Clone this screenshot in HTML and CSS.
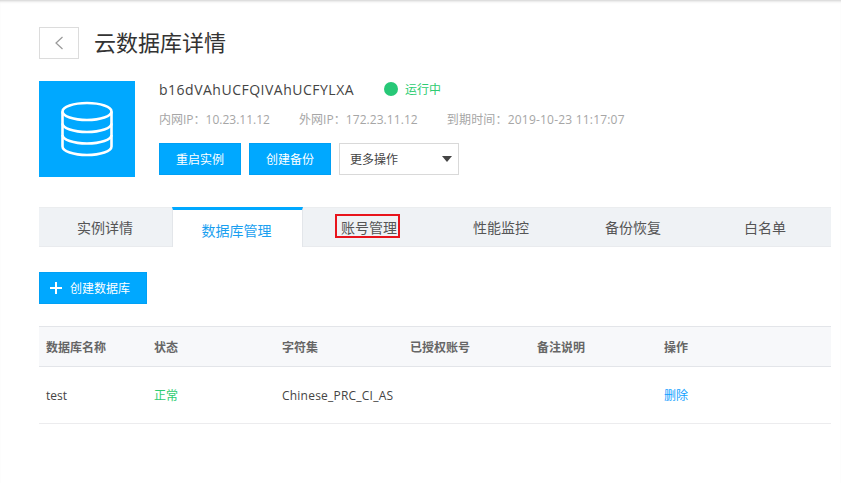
FILE: index.html
```html
<!DOCTYPE html>
<html lang="zh-CN">
<head>
<meta charset="utf-8">
<title>云数据库详情</title>
<link rel="stylesheet" href="styles.css">
</head>
<body>
<div class="page">
  <header class="head">
    <button class="back" aria-label="返回">
      <svg width="10" height="14" viewBox="0 0 10 14"><path d="M8.5 1 2 7l6.500 6" fill="none" stroke="#999" stroke-width="1.2"/></svg>
    </button>
    <h1 class="title">云数据库详情</h1>
  </header>

  <section class="summary">
    <div class="db-icon">
      <svg width="52" height="56" viewBox="0 0 52 56" fill="none" stroke="#fff" stroke-width="2.600">
        <ellipse cx="26" cy="10.500" rx="24.500" ry="8.500"/>
        <path d="M1.500 10.500v35c0 4.700 11 8.500 24.500 8.500s24.500-3.800 24.500-8.500v-35"/>
        <path d="M1.500 22.500c0 4.700 11 8.500 24.500 8.500s24.500-3.800 24.500-8.500"/>
        <path d="M1.500 34c0 4.700 11 8.500 24.500 8.500s24.500-3.800 24.500-8.500"/>
      </svg>
    </div>
    <div class="info">
      <div class="name-row">
        <span class="name">b16dVAhUCFQIVAhUCFYLXA</span>
        <span class="status"><i class="dot"></i>运行中</span>
      </div>
      <div class="meta">
        <span>内网IP：10.23.11.12</span>
        <span class="ext">外网IP：172.23.11.12</span>
        <span class="expire">到期时间：2019-10-23 11:17:07</span>
      </div>
      <div class="actions">
        <button class="btn">重启实例</button>
        <button class="btn">创建备份</button>
        <div class="select">更多操作<i class="caret"></i></div>
      </div>
    </div>
  </section>

  <nav class="tabs">
    <a class="tab">实例详情</a>
    <a class="tab active">数据库管理</a>
    <a class="tab"><span class="marked">账号管理</span></a>
    <a class="tab">性能监控</a>
    <a class="tab">备份恢复</a>
    <a class="tab">白名单</a>
  </nav>

  <button class="btn add">
    <svg width="12" height="12" viewBox="0 0 12 12"><path d="M6 0v12M0 6h12" stroke="#fff" stroke-width="2"/></svg>
    创建数据库
  </button>

  <table class="grid">
    <colgroup>
      <col class="c1"><col class="c2"><col class="c2"><col class="c3"><col class="c3"><col>
    </colgroup>
    <thead>
      <tr><th>数据库名称</th><th>状态</th><th>字符集</th><th>已授权账号</th><th>备注说明</th><th>操作</th></tr>
    </thead>
    <tbody>
      <tr><td>test</td><td class="ok">正常</td><td class="charset">Chinese_PRC_CI_AS</td><td></td><td></td><td><a class="link">删除</a></td></tr>
    </tbody>
  </table>
</div>
</body>
</html>
```
FILE: styles.css
```css
* { box-sizing: border-box; }
html, body { margin: 0; height: 100%; background: #fff; overflow: hidden; }
body {
  font-family: "Open Sans", "Noto Sans CJK SC", sans-serif;
  font-size: 12px;
  color: #444;
  box-shadow: inset 0 3px 3px -2px #ccc;
}
.page { padding: 27px 10px 0 39px; }

.head { display: flex; align-items: center; height: 32px; }
.back {
  width: 40px; height: 32px; padding: 0;
  display: flex; align-items: center; justify-content: center;
  background: #fff; border: 1px solid #dcdcdc;
}
.title { margin: -2px 0 0 15px; font-size: 22px; font-weight: 400; color: #333; line-height: 32px; }

.summary { display: flex; margin-top: 22px; height: 96px; }
.db-icon {
  width: 96px; height: 96px; background: #00a8ff;
  display: flex; align-items: center; justify-content: center;
}
.info { margin-left: 24px; }
.name-row { display: flex; align-items: center; height: 16px; }
.name { width: 225px; font-size: 14px; letter-spacing: .5px; color: #444; white-space: nowrap; }
.status { display: flex; align-items: center; color: #2ecc71; }
.dot { width: 14px; height: 14px; border-radius: 50%; background: #27c877; margin-right: 7px; }
.meta { display: flex; gap: 29px; margin-top: 15px; height: 16px; line-height: 16px; color: #a6a6a6; white-space: nowrap; }
.ext { letter-spacing: .06px; }
.expire { letter-spacing: .2px; }
.actions { display: flex; gap: 8px; margin-top: 15px; }

.btn {
  height: 32px; width: 82px; padding: 0;
  font: inherit; color: #fff;
  background: #00a8ff; border: 1px solid #00a0f5;
}
.select {
  position: relative;
  width: 120px; height: 32px; padding-left: 10px;
  line-height: 31px; color: #444;
  border: 1px solid #d9d9d9; background: #fff;
}
.caret {
  position: absolute; right: 6px; top: 12px;
  border: 5px solid transparent; border-top: 6px solid #444; border-bottom: 0;
}

.tabs {
  display: flex; margin-top: 30px; height: 40px; width: 792px;
  background: #eff2f5; border-top: 1px solid #ebedef; border-bottom: 1px solid #e9ebee;
}
.tab {
  flex: 0 0 132px; display: flex; align-items: center; justify-content: center;
  font-size: 14px; color: #555;
}
.tab:first-child { flex-basis: 133px; padding-right: 1px; }
.tab:nth-child(2) { flex-basis: 131px; padding-right: 2px; }
.active {
  height: 40px; margin-top: -1px; padding-top: 2px;
  background: #fff; color: #1a9ff0;
  border-top: 3px solid #00a8ff;
  border-left: 1px solid #e3e6ea; border-right: 1px solid #e3e6ea;
}
.marked {
  outline: 2px solid #e8141c;
  margin: -2px 0 0 -3px;
  padding: 4px 1px 0 4px; line-height: 16px;
}

.add {
  display: flex; align-items: center; gap: 8px;
  width: 108px; margin-top: 25px; padding-left: 10px;
}

.grid { width: 792px; margin-top: 22px; border-collapse: collapse; table-layout: fixed; }
.c1 { width: 108px; }
.c2 { width: 128px; }
.c3 { width: 127px; }
th, td { padding: 0 0 0 7px; text-align: left; white-space: nowrap; }
th { height: 40px; font-weight: 700; color: #666; background: #f7f8fa; border-top: 1px solid #e3e5e9; border-bottom: 1px solid #e3e5e9; font-size: 12px; }
td { height: 57px; color: #444; border-bottom: 1px solid #ececee; }
.charset { letter-spacing: .22px; }
.ok { color: #2ecc71; }
.link { color: #0fa0ff; }
```
